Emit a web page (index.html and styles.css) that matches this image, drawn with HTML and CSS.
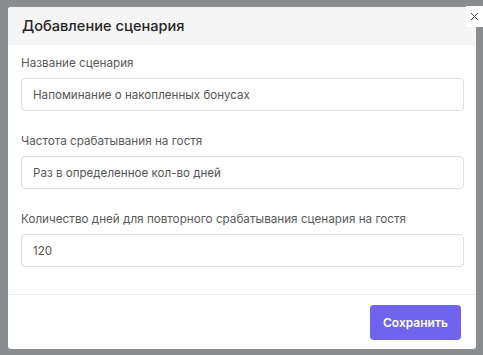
FILE: index.html
```html
<!DOCTYPE html>
<html lang="ru">
<head>
    <meta charset="UTF-8">
    <title>Добавление сценария</title>
    <link rel="stylesheet" href="styles.css">
</head>
<body>
    <div class="modal">
        <div class="modal-header">
            <h2>Добавление сценария</h2>
        </div>
        <div class="modal-body">
            <div class="field">
                <label>Название сценария</label>
                <div class="input">Напоминание о накопленных бонусах</div>
            </div>
            <div class="field">
                <label>Частота срабатывания на гостя</label>
                <div class="input">Раз в определенное кол-во дней</div>
            </div>
            <div class="field">
                <label>Количество дней для повторного срабатывания сценария на гостя</label>
                <div class="input">120</div>
            </div>
        </div>
        <div class="modal-footer">
            <button class="save-button">Сохранить</button>
        </div>
    </div>
    <button class="close-button">
        <svg width="9" height="9" viewBox="0 0 9 9"><path d="M1 1L8 8M8 1L1 8" stroke="#444" stroke-width="1"/></svg>
    </button>
</body>
</html>
```

FILE: styles.css
```css
* {
    margin: 0;
    padding: 0;
    box-sizing: border-box;
    font-family: "Inter", "Noto Sans", sans-serif;
}

body {
    background-color: #8a8d90;
    height: 355px;
    overflow: hidden;
    padding: 7px 0 0 8px;
}

.modal {
    width: 468px;
    height: 342px;
    background: white;
    border-radius: 3px;
    display: flex;
    flex-direction: column;
    overflow: hidden;
}

.modal-header {
    height: 38px;
    background: #f5f5f5;
    padding: 0 14px;
    display: flex;
    align-items: center;
}

.modal-header h2 {
    font-size: 14.6px;
    font-weight: 500;
    color: #262626;
}

.modal-body {
    padding: 10px 12px 27px 13px;
    display: flex;
    flex-direction: column;
    gap: 22px;
    border-bottom: 1px solid #eee;
}

.field label {
    display: block;
    font-size: 11.7px;
    line-height: 16px;
    color: #5a5a5a;
    margin-bottom: 7px;
}

.input {
    height: 33px;
    border: 1px solid #ddd;
    border-radius: 4px;
    padding: 0 11px;
    display: flex;
    align-items: center;
    font-size: 11.6px;
    color: #555;
}

.modal-footer {
    flex: 1;
    display: flex;
    justify-content: flex-end;
    align-items: flex-start;
    padding: 10px 15px 0 0;
}

.save-button {
    width: 91px;
    height: 35px;
    background: #7064ec;
    color: white;
    border: none;
    border-radius: 4px;
    font-size: 12px;
    font-weight: 600;
}

.close-button {
    position: absolute;
    top: 6px;
    right: 0;
    width: 17px;
    height: 21px;
    background: white;
    border: none;
    display: flex;
    align-items: center;
    justify-content: center;
}
```
